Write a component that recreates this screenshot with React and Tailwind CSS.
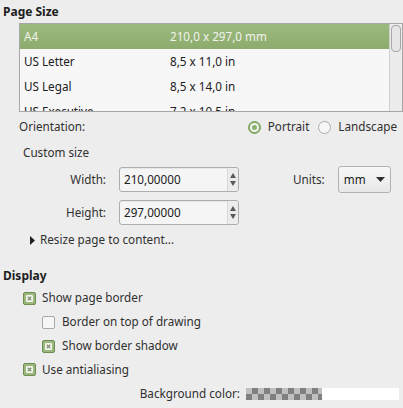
import React from "react";

const font = { fontFamily: '"Noto Sans", "Open Sans", sans-serif' };

function Check({ checked }) {
  if (!checked) {
    return (
      <span className="inline-block w-[13px] h-[13px] rounded-[2px] border border-[#a9a9a9] bg-[#f6f6f6] shrink-0" />
    );
  }
  return (
    <span className="inline-flex items-center justify-center w-[13px] h-[13px] rounded-[2px] border border-[#6e8c55] bg-[#9ab87c] shrink-0">
      <svg width="7" height="7" viewBox="0 0 7 7">
        <rect x="0" y="0" width="7" height="7" rx="1" fill="#f4f6f0" />
        <path d="M1.8 1.8 L5.2 5.2 M5.2 1.8 L1.8 5.2" stroke="#7d8f6e" strokeWidth="1.3" />
      </svg>
    </span>
  );
}

function Radio({ checked }) {
  if (checked) {
    return (
      <span className="inline-flex items-center justify-center w-[13px] h-[13px] rounded-full bg-[#8bb26a] border border-[#7aa25a] shrink-0">
        <span className="inline-flex items-center justify-center w-[9px] h-[9px] rounded-full bg-[#f4f4f4]">
          <span className="inline-block w-[5px] h-[5px] rounded-full bg-[#8bb26a]" />
        </span>
      </span>
    );
  }
  return (
    <span className="inline-block w-[13px] h-[13px] rounded-full border border-[#acacac] bg-[#f6f6f6] shrink-0" />
  );
}

function Spin({ value }) {
  return (
    <div className="flex w-[120px] h-[25px] rounded-[3px] border border-[#adadad] bg-[#f5f5f5] shadow-[inset_0_1px_1px_rgba(0,0,0,0.06)]">
      <div className="flex-1 flex items-center pl-[4px] text-[#202020]">{value}</div>
      <div className="w-[11px] flex flex-col items-center justify-center gap-[3px] border-l border-[#d8d8d8] bg-[#ececec] rounded-r-[3px]">
        <svg width="6" height="5" viewBox="0 0 6 5"><path d="M3 0 L6 5 L0 5 Z" fill="#5a5a5a" /></svg>
        <svg width="6" height="5" viewBox="0 0 6 5"><path d="M0 0 L6 0 L3 5 Z" fill="#5a5a5a" /></svg>
      </div>
    </div>
  );
}

const rows = [
  ["A4", "210,0 x 297,0 mm"],
  ["US Letter", "8,5 x 11,0 in"],
  ["US Legal", "8,5 x 14,0 in"],
  ["US Executive", "7,2 x 10,5 in"],
];

export default function App() {
  return (
    <div
      style={font}
      className="w-[403px] h-[408px] bg-[#ededed] text-[11.7px] text-[#303030] overflow-hidden flex flex-col"
    >
      <div className="h-[23px] flex items-center pl-[3px] font-bold text-[12px] text-[#202020]">Page Size</div>
      <div className="ml-[19px] h-[89px] border border-[#a6a6a6] bg-[#f7f7f7] flex overflow-hidden">
        <div className="flex-1 flex flex-col overflow-hidden">
          {rows.map(([a, b], i) => (
            <div
              key={a}
              className={
                "h-[25px] shrink-0 flex items-center " +
                (i === 0
                  ? "bg-gradient-to-b from-[#9dba7e] to-[#8dab6d] text-[#f0f3ee]"
                  : "text-[#202020]")
              }
            >
              <span className="w-[150px] pl-[4px]">{a}</span>
              <span>{b}</span>
            </div>
          ))}
        </div>
        <div className="w-[13px] border-l border-[#cfcfcf] bg-[#ececec] pt-[1px] pl-[1px]">
          <div className="w-[10px] h-[27px] rounded-[4px] border border-[#a8a8a8] bg-[#e6e6e6]" />
        </div>
      </div>

      <div className="h-[30px] flex items-center pl-[19px]">
        <span className="flex-1">Orientation:</span>
        <Radio checked />
        <span className="ml-[7px] mr-[9px]">Portrait</span>
        <Radio />
        <span className="ml-[7px] mr-[6px]">Landscape</span>
      </div>

      <div className="h-[21px] flex items-center pl-[23px]">Custom size</div>

      <div className="h-[33px] flex items-center">
        <span className="w-[106px] text-right">Width:</span>
        <span className="ml-[13px]"><Spin value="210,00000" /></span>
        <span className="ml-[54px]">Units:</span>
        <div className="ml-[13px] w-[53px] h-[27px] rounded-[3px] border border-[#b2b2b2] bg-gradient-to-b from-[#f7f7f7] to-[#e8e8e8] flex items-center pl-[5px] text-[#202020]">
          <span className="flex-1">mm</span>
          <svg width="9" height="5" viewBox="0 0 9 5" className="mr-[5px]"><path d="M0 0 L9 0 L4.5 5 Z" fill="#303030" /></svg>
        </div>
      </div>

      <div className="h-[33px] flex items-center">
        <span className="w-[106px] text-right">Height:</span>
        <span className="ml-[13px]"><Spin value="297,00000" /></span>
      </div>

      <div className="h-[22px] flex items-center pl-[30px]">
        <svg width="5" height="9" viewBox="0 0 5 9"><path d="M0 0 L5 4.5 L0 9 Z" fill="#202020" /></svg>
        <span className="ml-[5px]">Resize page to content...</span>
      </div>

      <div className="h-[15px]" />

      <div className="h-[20px] flex items-center pl-[3px] font-bold text-[12px] text-[#202020]">Display</div>

      <div className="h-[24px] flex items-center pl-[23px]">
        <Check checked />
        <span className="ml-[6px]">Show page border</span>
      </div>
      <div className="h-[24px] flex items-center pl-[42px]">
        <Check />
        <span className="ml-[7px]">Border on top of drawing</span>
      </div>
      <div className="h-[24px] flex items-center pl-[42px]">
        <Check checked />
        <span className="ml-[7px]">Show border shadow</span>
      </div>
      <div className="h-[23px] flex items-center pl-[23px]">
        <Check checked />
        <span className="ml-[6px]">Use antialiasing</span>
      </div>

      <div className="h-[26px] flex items-center justify-end pr-[4px]">
        <span>Background color:</span>
        <div className="ml-[6px] w-[153px] h-[12px] flex">
          <div
            className="w-[76px] h-[12px] bg-[#c0c0c0]"
            style={{
              backgroundImage:
                "linear-gradient(45deg, #808080 25%, transparent 25%, transparent 75%, #808080 75%), linear-gradient(45deg, #808080 25%, transparent 25%, transparent 75%, #808080 75%)",
              backgroundSize: "12px 12px",
              backgroundPosition: "0 0, 6px 6px",
            }}
          />
          <div className="flex-1 bg-white" />
        </div>
      </div>
    </div>
  );
}
